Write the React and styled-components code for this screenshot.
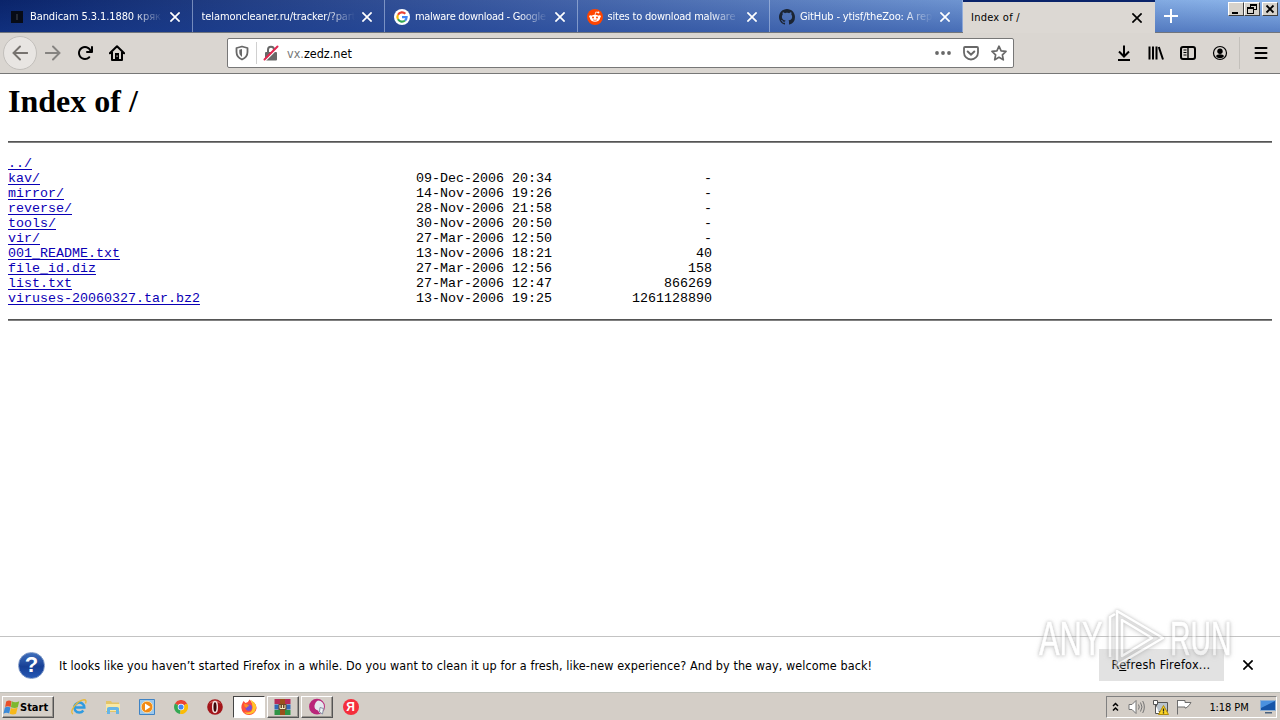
import * as React from 'react';
import styled, { createGlobalStyle, css } from 'styled-components';

const TABS = [
  { title: 'Bandicam 5.3.1.1880 кряк', icon: 'bandicam', spacing: -0.1 },
  { title: 'telamoncleaner.ru/tracker/?part', spacing: -0.1 },
  { title: 'malware download - Google', icon: 'google', spacing: -0.3 },
  { title: 'sites to download malware', icon: 'reddit', spacing: -0.2 },
  { title: 'GitHub - ytisf/theZoo: A rep', icon: 'github', spacing: -0.15 },
  { title: 'Index of /', active: true, spacing: 0.25 },
];

const FILES = [
  { name: '../' },
  { name: 'kav/', date: '09-Dec-2006 20:34', size: '-' },
  { name: 'mirror/', date: '14-Nov-2006 19:26', size: '-' },
  { name: 'reverse/', date: '28-Nov-2006 21:58', size: '-' },
  { name: 'tools/', date: '30-Nov-2006 20:50', size: '-' },
  { name: 'vir/', date: '27-Mar-2006 12:50', size: '-' },
  { name: '001_README.txt', date: '13-Nov-2006 18:21', size: '40' },
  { name: 'file_id.diz', date: '27-Mar-2006 12:56', size: '158' },
  { name: 'list.txt', date: '27-Mar-2006 12:47', size: '866269' },
  { name: 'viruses-20060327.tar.bz2', date: '13-Nov-2006 19:25', size: '1261128890' },
];

export default function App() {
  return (
    <Screen>
      <GlobalStyle />
      <TabStrip>
        {TABS.map((tab) => (
          <Tab key={tab.title} $active={tab.active}>
            {tab.icon && <Favicon name={tab.icon} />}
            <TabTitle $active={tab.active} $spacing={tab.spacing}>
              {tab.title}
            </TabTitle>
            <CloseIcon />
          </Tab>
        ))}
        <NewTab>
          <Svg $size={14} viewBox='0 0 14 14'>
            <path d='M7 0v14M0 7h14' stroke='#fff' strokeWidth='2' />
          </Svg>
        </NewTab>
        <WindowControls />
      </TabStrip>
      <Toolbar />
      <Page>
        <Heading>Index of /</Heading>
        <Rule />
        <Listing>
          {FILES.map((file) => (
            <FileRow key={file.name}>
              <FileLink href='#'>{file.name}</FileLink>
              <span>{file.date}</span>
              <FileSize>{file.size}</FileSize>
            </FileRow>
          ))}
        </Listing>
        <Rule />
      </Page>
      <Notification>
        <HelpIcon />
        <Message>
          It looks like you haven’t started Firefox in a while. Do you want to clean it up for a
          fresh, like-new experience? And by the way, welcome back!
        </Message>
        <RefreshButton>
          R<u>e</u>fresh Firefox...
        </RefreshButton>
        <CloseIcon />
      </Notification>
      <Taskbar />
      <Watermark>
        <WatermarkWord>ANY</WatermarkWord>
        <svg width='62' height='60' viewBox='0 0 62 60'>
          <path
            d='M13 6l-5 3v40M15 3v54l46-27zM20 12v36l30-18z'
            fill='none'
            stroke='#fff'
            strokeWidth='2.6'
            strokeLinejoin='round'
          />
        </svg>
        <WatermarkWord>RUN</WatermarkWord>
      </Watermark>
    </Screen>
  );
}

function CloseIcon() {
  return (
    <Svg $size={10} viewBox='0 0 10 10'>
      <path d='M.4.4l9.200 9.200M9.600.4L.4 9.600' stroke='currentColor' strokeWidth='1.7' />
    </Svg>
  );
}

function Favicon({ name }) {
  if (name === 'bandicam') {
    return (
      <Svg $size={16} viewBox='0 0 16 16'>
        <path fill='#070b16' d='M2 2h12v12H2z' />
        <path d='M8 5v6' stroke='#343842' strokeWidth='1.4' />
      </Svg>
    );
  }
  if (name === 'google') {
    return (
      <Svg $size={16} viewBox='0 0 16 16'>
        <circle cx='8' cy='8' r='8' fill='#fff' />
        <g fill='none' strokeWidth='2.2'>
          <path d='M4 5.7A4.6 4.6 0 0 1 11.3 4.8' stroke='#ea4335' />
          <path d='M4 5.7a4.6 4.6 0 0 0 0 4.6' stroke='#fbbc05' />
          <path d='M4 10.3a4.6 4.6 0 0 0 7 1.2' stroke='#34a853' />
          <path d='M11 11.5A4.6 4.6 0 0 0 12.6 8.2H8' stroke='#4285f4' />
        </g>
      </Svg>
    );
  }
  if (name === 'reddit') {
    return (
      <Svg $size={16} viewBox='0 0 16 16'>
        <circle cx='8' cy='8' r='8' fill='#ff4500' />
        <path d='M8 6l.8-3 2.4.5' fill='none' stroke='#fff' strokeWidth='.8' />
        <g fill='#fff'>
          <circle cx='11.4' cy='3.6' r='1' />
          <circle cx='3.5' cy='7.6' r='1.3' />
          <circle cx='12.5' cy='7.6' r='1.3' />
          <ellipse cx='8' cy='9.2' rx='5' ry='3.5' />
        </g>
        <circle cx='6' cy='8.5' r='1' fill='#ff4500' />
        <circle cx='10' cy='8.5' r='1' fill='#ff4500' />
        <path d='M6 10.8q2 1.2 4 0' fill='none' stroke='#ff4500' strokeWidth='.7' />
      </Svg>
    );
  }
  return (
    <Svg $size={16} viewBox='0 0 16 16'>
      <path
        fill='#1b2433'
        d='M8 0C3.58 0 0 3.58 0 8c0 3.54 2.29 6.53 5.47 7.59.4.07.55-.17.55-.38 0-.19-.01-.82-.01-1.49-2.01.37-2.53-.49-2.69-.94-.09-.23-.48-.94-.82-1.13-.28-.15-.68-.52-.01-.53.63-.01 1.08.58 1.23.82.72 1.21 1.87.87 2.33.66.07-.52.28-.87.51-1.07-1.78-.2-3.64-.89-3.64-3.95 0-.87.31-1.59.82-2.15-.08-.2-.36-1.02.08-2.12 0 0 .67-.21 2.2.82.64-.18 1.32-.27 2-.27s1.36.09 2 .27c1.53-1.04 2.2-.82 2.2-.82.44 1.1.16 1.92.08 2.12.51.56.82 1.27.82 2.15 0 3.07-1.87 3.75-3.65 3.95.29.25.54.73.54 1.48 0 1.07-.01 1.93-.01 2.2 0 .21.15.46.55.38A8.01 8.01 0 0 0 16 8c0-4.42-3.58-8-8-8z'
      />
    </Svg>
  );
}

function WindowControls() {
  return (
    <Controls>
      <ControlButton>
        <svg width='12' height='12'>
          <path fill='#000' d='M2 9h6v2H2z' />
        </svg>
      </ControlButton>
      <ControlButton $gap={2}>
        <svg width='12' height='12' fill='none' stroke='#000' shapeRendering='crispEdges'>
          <path d='M4.5 5V1.500h6v5H8M4 2.500h7M1.500 4.500h6v6h-6zM1 5.500h7' />
        </svg>
      </ControlButton>
      <ControlButton>
        <svg width='12' height='12'>
          <path d='M2.500 2.500l7 7M9.500 2.500l-7 7' stroke='#000' strokeWidth='1.8' />
        </svg>
      </ControlButton>
    </Controls>
  );
}

function Toolbar() {
  return (
    <Bar>
      <BackButton>
        <Svg $size={16} viewBox='0 0 16 16'>
          <ArrowPath d='M15.500 8H1.500M8 1.500L1.500 8 8 14.500' />
        </Svg>
      </BackButton>
      <ToolButton $muted>
        <Svg $size={16} viewBox='0 0 16 16'>
          <ArrowPath d='M.5 8h14M8 1.500L14.500 8 8 14.500' />
        </Svg>
      </ToolButton>
      <ToolButton>
        <Svg $size={16} viewBox='0 0 16 16'>
          <path
            fill='currentColor'
            d='M15 1a1 1 0 0 0-1 1v2.418A6.995 6.995 0 1 0 8 15a6.954 6.954 0 0 0 4.95-2.050 1 1 0 0 0-1.414-1.414A5.019 5.019 0 1 1 12.549 6H10a1 1 0 0 0 0 2h5a1 1 0 0 0 1-1V2a1 1 0 0 0-1-1z'
          />
        </Svg>
      </ToolButton>
      <ToolButton>
        <Svg $size={16} viewBox='0 0 16 16'>
          <path
            d='M.8 8.300L8 1.200l7.200 7.100M3 7v8h10V7'
            fill='none'
            stroke='currentColor'
            strokeWidth='2'
            strokeLinecap='round'
            strokeLinejoin='round'
          />
          <path fill='currentColor' d='M6 8h4v7H6z' />
          <path fill='#dad7d2' d='M7.500 10.500h1.200v1.200H7.500z' />
        </Svg>
      </ToolButton>
      <UrlBar>
        <Svg $size={16} viewBox='0 0 16 16'>
          <path
            d='M8 1.500l5.500 1.500v4c0 3.500-2 6-5.500 7.500C4.500 13 2.500 10.500 2.500 7V3z'
            fill='none'
            stroke='currentColor'
            strokeWidth='1.8'
            strokeLinejoin='round'
          />
          <path fill='currentColor' d='M8 4v8C6 10.500 5.300 9 5.300 7V4.800z' />
        </Svg>
        <UrlSeparator />
        <Svg $size={16} viewBox='0 0 16 16'>
          <path d='M5 8V4.700a3 3 0 0 1 6 0V8' fill='none' stroke='currentColor' strokeWidth='2' />
          <rect x='2' y='7' width='12' height='8.500' rx='1' fill='currentColor' />
          <path d='M2 15.500L14.500 3' stroke='#fff' strokeWidth='2' />
          <path d='M1.500 14.500L14.500 1.500' stroke='#e22850' strokeWidth='2' strokeLinecap='round' />
        </Svg>
        <Url>
          <span>vx.</span>zedz.net
        </Url>
        <PageActions>
          <Svg $size={16} viewBox='0 0 16 16' fill='currentColor'>
            <circle cx='2' cy='8' r='1.900' />
            <circle cx='8' cy='8' r='1.900' />
            <circle cx='14' cy='8' r='1.900' />
          </Svg>
          <Svg $size={16} viewBox='0 0 16 16' fill='none' stroke='currentColor' strokeWidth='1.800'>
            <path d='M2 2h12a1 1 0 0 1 1 1v4.500a7 7 0 0 1-14 0V3a1 1 0 0 1 1-1z' />
            <path d='M4.700 6.500L8 9.700l3.300-3.200' strokeWidth='2' strokeLinecap='round' />
          </Svg>
          <Svg $size={16} viewBox='0 0 16 16' fill='none' stroke='currentColor' strokeWidth='1.700'>
            <path
              d='M8 1.200l2.100 4.600 4.900.6-3.600 3.400.9 5L8 12.300l-4.300 2.500.9-5L1 6.400l4.900-.6z'
              strokeLinejoin='round'
            />
          </Svg>
        </PageActions>
      </UrlBar>
      <ToolGroup>
        <ToolButton>
          <Svg $size={16} viewBox='0 0 16 16' fill='none' stroke='currentColor' strokeWidth='2'>
            <path d='M8 .5v10.500M3 6.500l5 5 5-5' />
            <path d='M2 15h12' />
          </Svg>
        </ToolButton>
        <ToolButton>
          <Svg $size={16} viewBox='0 0 16 16' fill='none' stroke='currentColor' strokeWidth='2'>
            <path d='M1.500 1.500v13M5 1.500v13M8.500 1.500v13M10.800 2l4.200 12.500' />
          </Svg>
        </ToolButton>
        <ToolButton>
          <Svg $size={16} viewBox='0 0 16 16' fill='none' stroke='currentColor'>
            <rect x='1' y='2' width='14' height='12' rx='2' strokeWidth='2' />
            <path d='M8 2v12' strokeWidth='1.400' />
            <path d='M3.500 5h3M3.500 7.500h3M3.500 10h3' />
          </Svg>
        </ToolButton>
        <ToolButton>
          <Svg $size={16} viewBox='0 0 16 16'>
            <circle cx='8' cy='8' r='6.500' fill='none' stroke='currentColor' strokeWidth='1.200' />
            <circle cx='8' cy='6.300' r='2.700' fill='currentColor' />
            <path fill='currentColor' d='M3.800 11q1-1.800 4.200-1.800t4.200 1.800A5 5 0 0 1 3.800 11z' />
          </Svg>
        </ToolButton>
      </ToolGroup>
      <MenuButton>
        <Svg $size={16} viewBox='0 0 16 16'>
          <path
            d='M2.500 3h11M2.500 8h11M2.500 13h11'
            stroke='currentColor'
            strokeWidth='2'
            strokeLinecap='round'
          />
        </Svg>
      </MenuButton>
    </Bar>
  );
}

function HelpIcon() {
  return (
    <HelpBadge>
      <span>?</span>
    </HelpBadge>
  );
}

function Taskbar() {
  return (
    <TaskbarRow>
      <StartButton>
        <svg width='17' height='17' viewBox='0 0 16 16'>
          <path fill='#e8502a' d='M3 2.300Q5.500.6 8 2L7.200 7.500Q4.500 6.200 2 7.500z' />
          <path fill='#7db82f' d='M8.300 2.200q3.200 1.600 7 0l-1.400 5.600Q11 9.200 7.500 7.700z' />
          <path fill='#3c8ad8' d='M1.800 8q2.500-1.300 5.200-.1l-1.200 5.700Q3.200 12.200.4 13.800z' />
          <path fill='#f7b819' d='M7.400 8.400q2.800 1.200 6.300-.1l-1.400 5.600q-2.800 1.500-6 0z' />
        </svg>
        Start
      </StartButton>
      <QuickLaunch>
        <TaskSlot>
          <svg width='18' height='18' viewBox='0 0 18 18' fill='none'>
            <path
              d='M5 9.600h9.300A5 5 0 1 0 13.300 12.600'
              stroke='#2f9be0'
              strokeWidth='2.500'
            />
            <path d='M3 16C-1.500 14 7 2.500 14 1.800q3-.1 1.500 3.700' stroke='#e8b93a' strokeWidth='1.400' />
          </svg>
        </TaskSlot>
        <TaskSlot>
          <svg width='16' height='16' viewBox='0 0 16 16'>
            <path fill='#e3c467' d='M1 2h5l1 1.500h7V13H1z' />
            <path fill='#f8e8a4' d='M1 5h14v7H1z' />
            <path fill='#66b5e6' d='M2 15V9.500Q2 8 4 8h8q2 0 2 1.500V15h-3v-4H5v4z' />
          </svg>
        </TaskSlot>
        <TaskSlot>
          <svg width='16' height='16' viewBox='0 0 16 16'>
            <path fill='#9cc8ec' stroke='#3f83c4' d='M.5.5h15v15H.5z' />
            <circle cx='8' cy='8' r='5.800' fill='#f28a14' stroke='#fbd9a0' />
            <path fill='#fff' d='M6 4.500L11.500 8 6 11.500z' />
          </svg>
        </TaskSlot>
        <TaskSlot>
          <svg width='14' height='14' viewBox='0 0 16 16'>
            <path fill='#ea4335' d='M8 8L1.100 4A8 8 0 0 1 15 4z' />
            <path fill='#34a853' d='M8 8l-1 7.900A8 8 0 0 1 1.100 4z' />
            <path fill='#fbbc05' d='M8 8l7-4A8 8 0 0 1 7 15.900z' />
            <circle cx='8' cy='8' r='3.700' fill='#fff' />
            <circle cx='8' cy='8' r='2.900' fill='#4285f4' />
          </svg>
        </TaskSlot>
        <TaskSlot>
          <svg width='16' height='16' viewBox='0 0 16 16'>
            <circle cx='8' cy='8' r='7.800' fill='#a3151a' />
            <path fill='#d4635d' d='M2 5a6.800 6.800 0 0 1 12 0Q8 1 2 5z' />
            <ellipse cx='8' cy='8' rx='2.300' ry='5.500' fill='#3c080a' stroke='#f3e4e2' strokeWidth='1.500' />
          </svg>
        </TaskSlot>
        <TaskSlot $frame='pressed'>
          <svg width='16' height='16' viewBox='0 0 16 16'>
            <path
              fill='#ff4f3c'
              d='M1.500 4l1-2 2 2q3-.5 4-3.500 1.500 1 2 3l2-.5q3.500 3 3 6.500A7.600 7.600 0 0 1 .4 9Q.2 6 1.500 4z'
            />
            <path fill='#ffc52b' d='M9.500.8Q15.600 4 15 9A7 7 0 0 1 3 13q8 2 8.500-4 .3-4-2-8.200z' />
            <circle cx='7.700' cy='8.600' r='3.200' fill='#7550d8' />
            <path fill='#ff8b24' d='M3 4.500Q7 5 8.500 7 6 7 5.500 9 3 8 3 4.500z' />
          </svg>
        </TaskSlot>
        <TaskSlot $frame='raised'>
          <svg width='17' height='16' viewBox='0 0 16 16'>
            <path fill='#b72a58' d='M0 0h16v5H0z' />
            <path fill='#3268b8' d='M0 5.500h16v5H0z' />
            <path fill='#2e9445' d='M0 11h16v5H0z' />
            <path fill='#9c501b' d='M5.500 0h5v16h-5z' />
            <path fill='#6b4a28' d='M4 5h8v6H4z' />
            <path d='M5.500 6v3.500h5V6M8 6v3' fill='none' stroke='#f4e7bd' />
          </svg>
        </TaskSlot>
        <TaskSlot $frame='raised'>
          <svg width='18' height='18' viewBox='0 0 18 18'>
            <circle cx='9' cy='8.700' r='7.900' fill='#b92579' />
            <path fill='#e4e8ee' d='M10 2.500q6 .5 6 6.500l-2.500 6.500q-3-.5-3.500-3-4-1-3.500-5Q7.500 3.500 10 2.500z' />
            <path fill='#f4f6f8' d='M12 9.500l3.500 1-1 5.500-3-2z' stroke='#8593a3' />
          </svg>
        </TaskSlot>
        <TaskSlot>
          <YandexBadge>Я</YandexBadge>
        </TaskSlot>
      </QuickLaunch>
      <Tray>
        <svg width='7' height='10' viewBox='0 0 7 10' fill='none' stroke='#000' strokeWidth='1.500'>
          <path d='M1 4l2.500-2.500L6 4M1 8.500L3.500 6 6 8.500' />
        </svg>
        <svg width='17' height='16' viewBox='0 0 17 16' fill='none' stroke='#747474'>
          <path fill='#fff' d='M1 5.500h3l4-4v13l-4-4H1z' />
          <path d='M10.500 5.500q1.500 2.500 0 5M12.500 3.500q3 4.500 0 9M14.700 2q3.300 6 0 12' />
        </svg>
        <svg width='17' height='16' viewBox='0 0 17 16'>
          <path fill='#b9c3cc' stroke='#555' d='M4.500 3.500h11v9h-11z' />
          <path fill='#fff' stroke='#555' d='M1.500 1.500h4v4h-4zM3.500 5.500v9h4' />
          <path fill='#fbd525' stroke='#b18b0b' d='M11.500 6.500l5 9h-10z' />
          <path d='M11.500 9.500v3M11.500 13.300v1.300' stroke='#222' strokeWidth='1.300' />
        </svg>
        <svg width='17' height='16' viewBox='0 0 17 16'>
          <path fill='#fff' stroke='#6e6e6e' d='M1.500 1v14.500M2 1.500h7v2h6l-2 3-3 2.500H9v-1H2' />
        </svg>
        <Clock>1:18 PM</Clock>
        <svg width='16' height='14' viewBox='0 0 16 14'>
          <path fill='#1655a8' stroke='#8fb0d4' d='M.5.5h15v10H.5z' />
          <path fill='#4a91df' d='M1 1h14L1 8z' />
          <path fill='#49617d' d='M5 12h7v1.500H5z' />
        </svg>
      </Tray>
    </TaskbarRow>
  );
}

const GlobalStyle = createGlobalStyle`
  * {
    box-sizing: border-box;
  }
  body {
    margin: 0;
    overflow: hidden;
    background: #fff;
  }
`;

const uiFont = css`
  font-family: 'DejaVu Sans Condensed', 'DejaVu Sans', sans-serif;
  font-stretch: condensed;
  font-size: 11px;
  white-space: nowrap;
`;

const Screen = styled.div`
  position: relative;
  display: flex;
  flex-direction: column;
  width: 1280px;
  height: 720px;
  overflow: hidden;
  color: #000;
  ${uiFont}
`;

const Svg = styled.svg`
  display: block;
  flex: none;
  width: ${(p) => p.$size}px;
  height: ${(p) => p.$size}px;
`;

const TabStrip = styled.div`
  display: flex;
  flex: none;
  height: 33px;
  background:
    linear-gradient(to bottom, transparent, rgba(24, 62, 150, 0.45)),
    linear-gradient(to right, #0a246a, #3d5ca2 40%, #7096d2 76%, #8fb8ec);
  border-bottom: 1px solid #71757c;
`;

const Tab = styled.div`
  display: flex;
  flex: none;
  align-items: center;
  width: 192.5px;
  height: 32px;
  padding: 2px 12px 0 9px;
  color: #fff;
  border-right: 1px solid rgba(190, 205, 235, 0.55);
  ${(p) =>
    p.$active &&
    css`
      height: 33px;
      padding: 0 13px 0 8.5px;
      color: #000;
      background: #dcd8d3;
      border-top: 2px solid #0a246a;
      border-right: 0;
    `}
`;

const TabTitle = styled.span`
  flex: 1;
  min-width: 0;
  margin: 0 7px 0 0;
  overflow: hidden;
  letter-spacing: ${(p) => p.$spacing}px;
  line-height: 16px;
  ${Svg} + & {
    margin-left: 5px;
  }
  ${(p) => !p.$active && 'mask-image: linear-gradient(to left, transparent, #000 30px);'}
`;

const NewTab = styled.div`
  display: flex;
  align-items: center;
  justify-content: center;
  width: 32px;
`;

const Controls = styled.div`
  display: flex;
  align-items: flex-start;
  margin-left: auto;
  padding: 2px 2px 0 0;
`;

const ControlButton = styled.div`
  display: flex;
  width: 16px;
  height: 14px;
  margin-right: ${(p) => p.$gap || 0}px;
  padding-left: 1px;
  background: #d6d2cb;
  border: 1px solid;
  border-color: #fff #404040 #404040 #fff;
`;

const Bar = styled.div`
  display: flex;
  flex: none;
  align-items: center;
  height: 41px;
  padding-left: 3px;
  background: #dad6d1;
  border-bottom: 1px solid #777;
`;

const ToolButton = styled.div`
  display: flex;
  flex: none;
  align-items: center;
  justify-content: center;
  width: 32px;
  height: 32px;
  color: ${(p) => (p.$muted ? '#858380' : '#000')};
`;

const BackButton = styled(ToolButton)`
  width: 34px;
  height: 34px;
  color: #77736f;
  background: #e8e5e2;
  border: 1px solid #c2bfbb;
  border-radius: 50%;
`;

const ArrowPath = styled.path`
  fill: none;
  stroke: currentColor;
  stroke-width: 1.9;
  stroke-linecap: round;
`;

const UrlBar = styled.div`
  display: flex;
  flex: none;
  align-items: center;
  width: 787px;
  height: 30px;
  margin-left: 94px;
  padding: 0 6px;
  color: #686868;
  background: #fff;
  border: 1px solid #777;
  border-radius: 2px;
`;

const UrlSeparator = styled.div`
  width: 1px;
  height: 22px;
  margin: 0 6px;
  background: #d0d0d0;
`;

const Url = styled.span`
  margin-left: 8px;
  padding-top: 1px;
  color: #000;
  font-size: 12.5px;
  span {
    color: #777;
  }
`;

const PageActions = styled.div`
  display: flex;
  gap: 12px;
  margin-left: auto;
`;

const ToolGroup = styled.div`
  display: flex;
  flex: none;
  margin-left: 94px;
`;

const MenuButton = styled(ToolButton)`
  width: 41px;
  margin-left: 3px;
  padding-left: 2px;
  border-left: 1px solid #c3c0bb;
`;

const Page = styled.main`
  flex: 1;
  padding: 0 8px;
`;

const Heading = styled.h1`
  margin: 9px 0 21px;
  font: bold 32px/37px 'Liberation Serif', serif;
`;

const Rule = styled.hr`
  height: 2px;
  margin: 0;
  background: #808080;
  border: 0;
  border-top: 1px solid #555;
`;

const Listing = styled.div`
  margin: 13px 0;
  font: 13.333px/15px 'Liberation Mono', monospace;
`;

const FileRow = styled.div`
  display: grid;
  grid-template-columns: 408px 136px 160px;
  height: 15px;
`;

const FileLink = styled.a`
  justify-self: start;
  color: #0b00b5;
  text-decoration-thickness: 1px;
  text-underline-offset: 2px;
`;

const FileSize = styled.span`
  text-align: right;
`;

const Notification = styled.div`
  display: flex;
  flex: none;
  align-items: center;
  height: 56px;
  padding: 1px 27px 0 18px;
  border-top: 1px solid #c3c3c3;
`;

const HelpBadge = styled.div`
  display: flex;
  align-items: center;
  justify-content: center;
  width: 27px;
  height: 27px;
  color: #fff;
  font: bold 22px 'Liberation Sans', sans-serif;
  background: linear-gradient(#3f6fbb, #173f95 55%, #2658b4);
  border: 1px solid #7894c5;
  border-radius: 50%;
`;

const Message = styled.span`
  margin-left: 14px;
  font-size: 12.5px;
  letter-spacing: 0.08px;
`;

const RefreshButton = styled.div`
  width: 125px;
  height: 32px;
  margin: 0 19px 0 auto;
  padding-right: 1px;
  font-size: 12.5px;
  letter-spacing: 0.28px;
  line-height: 32px;
  text-align: center;
  background: #e2e2e2;
`;

const TaskbarRow = styled.footer`
  display: flex;
  flex: none;
  align-items: flex-start;
  height: 28px;
  padding: 3px 3px 0 2px;
  background: #d4cec7;
  border-top: 1px solid #bfc1ba;
`;

const raised = css`
  border: 1px solid;
  border-color: #fff #555 #555 #fff;
  box-shadow: inset -1px -1px #99958f;
`;

const StartButton = styled.div`
  display: flex;
  align-items: center;
  width: 52px;
  height: 22px;
  padding-left: 0;
  font-weight: bold;
  ${raised}
`;

const QuickLaunch = styled.div`
  display: flex;
  gap: 2px;
  margin-left: 9.5px;
`;

const TaskSlot = styled.div`
  display: flex;
  align-items: center;
  justify-content: center;
  width: 31.9px;
  height: 22px;
  ${(p) => p.$frame === 'raised' && raised}
  ${(p) =>
    p.$frame === 'pressed' &&
    css`
      background: #fff;
      border: 1px solid;
      border-color: #444 #fff #fff #444;
    `}
`;

const YandexBadge = styled.div`
  width: 16px;
  height: 16px;
  color: #fff;
  font: bold 12px/16px 'Liberation Sans', sans-serif;
  text-align: center;
  background: #f52e3c;
  border-radius: 50%;
`;

const Tray = styled.div`
  display: flex;
  align-items: center;
  width: 171px;
  height: 22px;
  margin-left: auto;
  padding: 0 0 0 5px;
  border: 1px solid;
  border-color: #808080 #fff #fff #808080;
  svg {
    flex: none;
  }
  svg + svg {
    margin-left: 7px;
  }
  svg:nth-child(2) {
    margin-left: 9px;
  }
`;

const Clock = styled.span`
  width: 42px;
  margin: 0 10px 0 auto;
  letter-spacing: -0.1px;
  text-align: center;
`;

const Watermark = styled.div`
  position: absolute;
  top: 608px;
  left: 1039px;
  display: flex;
  align-items: center;
  width: 195px;
  height: 60px;
  opacity: 0.55;
  filter: drop-shadow(0 0 1.5px #999) drop-shadow(0 1px 2px #bbb);
  pointer-events: none;
  svg {
    flex: none;
    margin: 0 4px 0 1px;
  }
`;

const WatermarkWord = styled.span`
  width: 62px;
  color: #fff;
  font: 49px/62px 'Liberation Sans', sans-serif;
  -webkit-text-stroke: 0.6px #fff;
  transform: scaleX(0.63);
  transform-origin: left;
  & + svg + & {
    margin-left: 2px;
    transform: scaleX(0.58);
  }
`;
